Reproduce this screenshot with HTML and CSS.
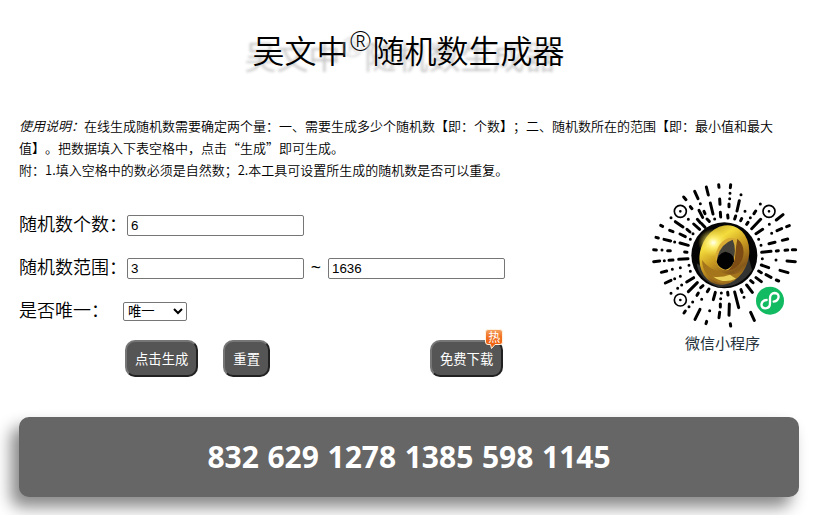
FILE: index.html
```html
<!DOCTYPE html>
<html lang="zh-CN">
<head>
    <meta charset="UTF-8">
    <meta name="viewport" content="width=device-width, initial-scale=1.0">
    <title>随机数生成器</title>
    <link rel="stylesheet" href="styles.css">
</head>
<body>
    <div class="container">
        <h1 class="title">吴文中<sup>®</sup>随机数生成器</h1>
        <div class="intro">
            <p><em>使用说明：</em>在线生成随机数需要确定两个量：一、需要生成多少个随机数【即：个数】；二、随机数所在的范围【即：最小值和最大值】。把数据填入下表空格中，点击“生成”即可生成。</p>
            <p>附：1.填入空格中的数必须是自然数；2.本工具可设置所生成的随机数是否可以重复。</p>
        </div>
        <div class="main">
            <form class="form">
                <div class="row">
                    <label for="count">随机数个数：</label>
                    <input type="text" id="count" value="6">
                </div>
                <div class="row">
                    <label for="min">随机数范围：</label>
                    <input type="text" id="min" value="3">
                    <span class="tilde">~</span>
                    <input type="text" id="max" value="1636">
                </div>
                <div class="row">
                    <label class="short" for="unique">是否唯一：</label>
                    <select id="unique">
                        <option>唯一</option>
                        <option>不唯一</option>
                    </select>
                </div>
                <div class="buttons">
                    <button type="button">点击生成</button>
                    <button type="reset">重置</button>
                    <button type="button" class="download">免费下载
                        <span class="hot">
                            <svg width="20" height="22" viewBox="0 0 20 22">
                                <defs>
                                    <linearGradient id="hotFill" x1="0" y1="0" x2="0" y2="1">
                                        <stop offset="0" stop-color="#f6a364"/>
                                        <stop offset=".4" stop-color="#f07020"/>
                                        <stop offset="1" stop-color="#ee5808"/>
                                    </linearGradient>
                                </defs>
                                <path d="M4 1.5H16Q18.5 1.5 18.5 4V14Q18.5 16.500 16 16.500H11L7.500 20.500L6.500 16.500H4Q1.500 16.500 1.500 14V4Q1.500 1.500 4 1.500Z" fill="url(#hotFill)" stroke="#fff3df" stroke-width="1"/>
                            </svg>
                            <b>热</b>
                        </span>
                    </button>
                </div>
            </form>
            <div class="qr">
                <svg width="150" height="150" viewBox="0 0 450 450">
                    <defs>
                        <linearGradient id="gold" x1="0" y1="0" x2="1" y2="1">
                            <stop offset="0" stop-color="#a8881c"/>
                            <stop offset=".28" stop-color="#f4dc3c"/>
                            <stop offset=".5" stop-color="#c99a20"/>
                            <stop offset=".75" stop-color="#86581a"/>
                            <stop offset="1" stop-color="#c99a30"/>
                        </linearGradient>
                        <radialGradient id="shine">
                            <stop offset="0" stop-color="#fffff0"/>
                            <stop offset=".3" stop-color="#fff27c"/>
                            <stop offset="1" stop-color="#f4dc3c" stop-opacity="0"/>
                        </radialGradient>
                    </defs>
                    <g class="rays">
                        <path d="M206 14L207 22M169 21L175 45M134 34L144 56M101 51L108 59M121 80L126 86M209 57L210 73M181 69L189 102M211 97L212 111M147 91L158 112M162 94L165 101M171 117L178 124M32 136L38 139M76 125L99 141M142 118L151 128M59 151L69 155M90 162L106 170M131 132L149 148M155 131L165 142M111 148L120 156M18 172L25 174M42 178L62 183M90 189L115 196M11 209L19 210M53 212L61 212M104 216L111 217"/>
                        <path class="dots" d="M151 71h0M63 113h0M115 118h0M194 117h0M129 161h0M121 178h0M74 186h0M36 210h0"/>
                    </g>
                    <g class="rays" transform="translate(225 0)">
                        <path d="M17 14L16 23M12 72L12 80M8 105L9 114M43 62L36 93M32 108L29 117M92 93L87 101M50 116L47 122M69 127L65 133M107 118L80 146M174 104L154 120M193 137L185 140M170 146L156 152M113 148L93 161M188 177L172 181M150 187L132 191M212 209L202 209M188 210L180 211M160 212L154 213M138 214L110 217"/>
                        <path class="dots" d="M15 40h0M14 56h0M48 44h0M60 94h0M106 72h0M76 113h0M133 133h0M140 160h0M101 178h0M108 196h0"/>
                    </g>
                    <g class="rays" transform="translate(0 225)">
                        <path d="M11 20L29 18M57 16L69 15M86 13L114 11M34 52L50 48M46 84L63 76M110 81L131 68M115 110L142 83M152 98L159 92M141 121L145 114M172 110L177 102M102 174L106 168M150 163L135 193M196 112L190 134M211 147L211 156M209 172L207 188M170 199L168 206"/>
                        <path class="dots" d="M43 17h0M67 43h0M91 38h0M117 31h0M121 49h0M74 71h0M91 64h0M95 90h0M83 100h0M63 115h0M128 141h0M117 155h0M155 133h0M179 167h0M214 114h0M212 131h0"/>
                    </g>
                    <g class="rays" transform="translate(225 225)">
                        <path d="M186 18L211 20M109 30L131 38M165 46L189 53M101 48L109 53M123 59L138 67M154 75L161 78M93 68L109 80M77 77L84 83M65 90L82 112M48 104L51 112M8 112L9 120M13 147L12 181M29 111L41 158M16 206L17 213M77 172L88 196"/>
                        <path class="dots" d="M112 11h0M153 15h0M57 127h0"/>
                    </g>
                    <g class="eyes">
                        <circle cx="91" cy="94" r="18"/>
                        <circle cx="357" cy="94" r="18"/>
                        <circle cx="91" cy="360" r="18"/>
                        <path d="M91 94h0M357 94h0M91 360h0"/>
                    </g>
                    <circle cx="223" cy="226" r="99" fill="#050505"/>
                    <path d="M140 250Q145 300 206 321Q270 324 306 270L290 210L200 290Z" fill="#333331"/>
                    <ellipse cx="223" cy="225" rx="73" ry="91" transform="rotate(18 223 225)" fill="url(#gold)"/>
                    <path d="M156 240Q158 290 205 308Q250 316 282 270Q250 293 212 276Q176 268 156 240Z" fill="#a5751c"/>
                    <path d="M190 290Q215 293 240 284L258 296Q220 313 190 290Z" fill="#ead058"/>
                    <ellipse cx="190" cy="188" rx="46" ry="42" fill="url(#shine)"/>
                    <ellipse cx="236" cy="222" rx="37" ry="50" transform="rotate(22 236 222)" fill="#d8ac34"/>
                    <path d="M262 176Q290 200 276 240Q262 268 234 272Q256 250 256 222Q258 196 262 176Z" fill="#7c4c14"/>
                    <path d="M203 230Q212 192 248 179Q260 205 250 240L226 268Q200 258 203 230Z" fill="#45433a"/>
                    <path d="M200 246Q204 220 226 215Q252 220 252 244Q244 266 226 269Q206 264 200 246Z" fill="#020202"/>
                    <circle cx="360" cy="362" r="42" fill="#12bb61"/>
                    <path d="M350 360C330 362 330 385 346 385C356 385 360 378 360 370V355C360 346 366 339 374 339C391 340 389 362 371 365" fill="none" stroke="#fff" stroke-width="7" stroke-linecap="round"/>
                </svg>
                <p>微信小程序</p>
            </div>
        </div>
        <div class="result">832 629 1278 1385 598 1145</div>
    </div>
</body>
</html>
```

FILE: styles.css
```css
body {
    margin: 0;
    background-color: #fff;
    color: #000;
    font-family: "Open Sans", "Noto Sans CJK SC", sans-serif;
    text-spacing-trim: space-all;
}
.container {
    width: 780px;
    height: 515px;
    padding: 0 19px;
    overflow: hidden;
}
.title {
    margin: 0 0 0 -1px;
    padding: 25px 0 42px;
    height: 48px;
    line-height: 48px;
    font-family: "Noto Sans CJK SC", sans-serif;
    font-size: 32px;
    font-weight: 350;
    text-align: center;
    text-shadow: -8px 6px 3px #c4c4c4;
}
.title sup {
    display: inline-block;
    width: 24px;
    font-family: "Open Sans", sans-serif;
    font-size: 27px;
    line-height: 0;
}
.intro {
    font-family: "Noto Sans CJK SC", sans-serif;
    font-size: 13px;
    font-weight: 350;
    line-height: 22px;
}
.intro p {
    margin: 0;
}
.main {
    display: flex;
    justify-content: space-between;
    height: 236px;
}
.form {
    padding-top: 23px;
}
.row {
    display: flex;
    align-items: center;
    height: 43px;
    font-size: 18px;
    font-weight: 350;
}
.row label {
    width: 108px;
    padding-bottom: 5px;
    font-family: "Noto Sans CJK SC", sans-serif;
}
.row label.short {
    width: 104px;
}
.row input {
    box-sizing: border-box;
    width: 177px;
    height: 21px;
    padding: 1px 3px;
    border: 1px solid #767676;
    border-radius: 2px;
    font-family: "Liberation Sans", sans-serif;
    font-size: 13.333px;
}
.tilde {
    width: 24px;
    padding-bottom: 4px;
    font-weight: 400;
    text-align: center;
}
.row select {
    width: 64px;
    height: 19px;
    border: 1px solid #767676;
    border-radius: 2px;
    background-color: #fff;
    color: #000;
    font-family: "Liberation Sans", "Noto Sans CJK SC", sans-serif;
    font-size: 13.333px;
}
.buttons {
    display: flex;
    padding: 7px 0 0 106px;
    gap: 25px;
}
button {
    position: relative;
    box-sizing: border-box;
    height: 37px;
    padding: 0 8px;
    border: 2px solid;
    border-color: #767676 #212121 #212121 #767676;
    border-radius: 10px;
    background-color: #555;
    color: #fff;
    font-family: "Noto Sans CJK SC", sans-serif;
    font-size: 13.333px;
    white-space: nowrap;
}
.download {
    margin-left: 135px;
}
.hot {
    position: absolute;
    top: -14px;
    right: -3px;
    width: 20px;
    height: 22px;
}
.hot svg {
    display: block;
}
.hot b {
    position: absolute;
    top: 0;
    left: 4px;
    font-size: 12px;
    font-weight: 400;
    line-height: 18px;
}
.qr {
    width: 150px;
    margin: -1px -1px 0 0;
    text-align: center;
}
.qr svg {
    display: block;
}
.qr p {
    margin: 2px 0 0 -5px;
    color: #26323c;
    font-family: "Noto Sans CJK SC", sans-serif;
    font-size: 15px;
    line-height: 22px;
}
.rays path {
    fill: none;
    stroke: #000;
    stroke-width: 9;
    stroke-linecap: round;
}
.eyes circle {
    fill: #fff;
    stroke: #000;
    stroke-width: 5;
}
.eyes path {
    stroke: #000;
    stroke-width: 8;
    stroke-linecap: round;
}
.result {
    height: 80px;
    border-radius: 10px;
    background-color: #666;
    box-shadow: -8px 10px 16px #888;
    color: #fff;
    font-size: 30px;
    font-weight: bold;
    line-height: 80px;
    text-align: center;
    word-spacing: 0.8px;
}
```
